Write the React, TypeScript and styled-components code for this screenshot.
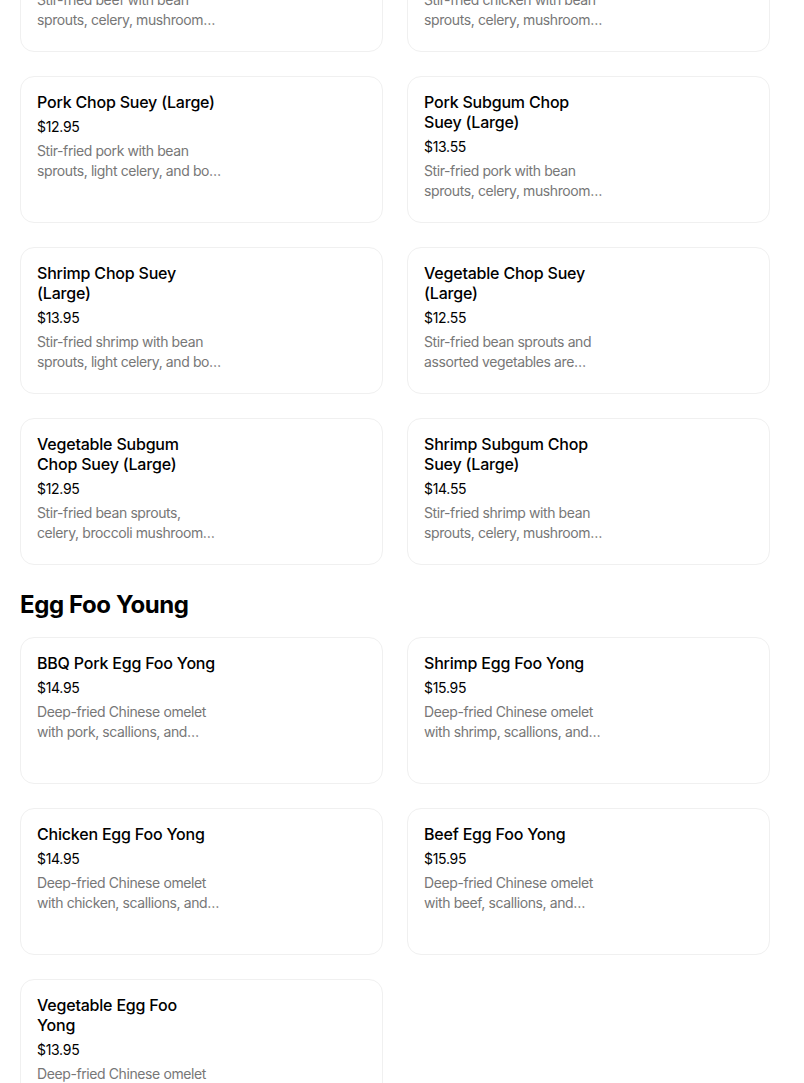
import React from "react";
import styled, { createGlobalStyle } from "styled-components";

const Global = createGlobalStyle`
  html, body { margin: 0; padding: 0; background: #ffffff; }
  body { font-family: Inter, "Noto Sans", "Liberation Sans", sans-serif; color: #000; overflow: hidden; }
`;

const Page = styled.main`
  padding: 0 34px 0 20px;
  margin-top: -95px;
  display: flex;
  flex-direction: column;
`;

const Section = styled.section`
  display: flex;
  flex-direction: column;
`;

const SectionTitle = styled.h2`
  margin: 24px 0 16px;
  font-size: 24px;
  line-height: 32px;
  font-weight: 700;
  letter-spacing: -0.4px;
  color: #000;
`;

const Grid = styled.div`
  display: grid;
  grid-template-columns: 1fr 1fr;
  column-gap: 24px;
  row-gap: 24px;
`;

const Card = styled.article`
  box-sizing: border-box;
  height: 147px;
  border: 1px solid #f0f0f0;
  border-radius: 14px;
  padding: 15px 16px;
  display: flex;
  background: #fff;
`;

const Info = styled.div`
  width: 187px;
  display: flex;
  flex-direction: column;
`;

const Name = styled.div`
  max-width: 181px;
  font-size: 16px;
  line-height: 20px;
  font-weight: 500;
  letter-spacing: -0.2px;
  color: #000;
`;

const Price = styled.div`
  margin-top: 5px;
  font-size: 14px;
  line-height: 20px;
  letter-spacing: -0.3px;
  color: #000;
`;

const Desc = styled.div`
  margin-top: 4px;
  font-size: 14px;
  line-height: 20px;
  letter-spacing: -0.4px;
  color: #777;
  display: -webkit-box;
  -webkit-line-clamp: 2;
  -webkit-box-orient: vertical;
  overflow: hidden;
`;

type Item = { name: string; price: string; desc: string };

const chopSuey: Item[] = [
  { name: "Beef Subgum Chop Suey (Large)", price: "$14.55", desc: "Stir-fried beef with bean sprouts, celery, mushroom and water chestnuts." },
  { name: "Chicken Subgum Chop Suey (Large)", price: "$13.55", desc: "Stir-fried chicken with bean sprouts, celery, mushroom and water chestnuts." },
  { name: "Pork Chop Suey (Large)", price: "$12.95", desc: "Stir-fried pork with bean sprouts, light celery, and bok choy." },
  { name: "Pork Subgum Chop Suey (Large)", price: "$13.55", desc: "Stir-fried pork with bean sprouts, celery, mushroom and water chestnuts." },
  { name: "Shrimp Chop Suey (Large)", price: "$13.95", desc: "Stir-fried shrimp with bean sprouts, light celery, and bok choy." },
  { name: "Vegetable Chop Suey (Large)", price: "$12.55", desc: "Stir-fried bean sprouts and assorted vegetables are served." },
  { name: "Vegetable Subgum Chop Suey (Large)", price: "$12.95", desc: "Stir-fried bean sprouts, celery, broccoli mushroom and water chestnuts." },
  { name: "Shrimp Subgum Chop Suey (Large)", price: "$14.55", desc: "Stir-fried shrimp with bean sprouts, celery, mushroom and water chestnuts." },
];

const eggFooYoung: Item[] = [
  { name: "BBQ Pork Egg Foo Yong", price: "$14.95", desc: "Deep-fried Chinese omelet with pork, scallions, and vegetables." },
  { name: "Shrimp Egg Foo Yong", price: "$15.95", desc: "Deep-fried Chinese omelet with shrimp, scallions, and vegetables." },
  { name: "Chicken Egg Foo Yong", price: "$14.95", desc: "Deep-fried Chinese omelet with chicken, scallions, and vegetables." },
  { name: "Beef Egg Foo Yong", price: "$15.95", desc: "Deep-fried Chinese omelet with beef, scallions, and vegetables." },
  { name: "Vegetable Egg Foo Yong", price: "$13.95", desc: "Deep-fried Chinese omelet with vegetables and scallions." },
];

const MenuCard = ({ item }: { item: Item }) => (
  <Card>
    <Info>
      <Name>{item.name}</Name>
      <Price>{item.price}</Price>
      <Desc>{item.desc}</Desc>
    </Info>
  </Card>
);

export default function App() {
  return (
    <>
      <Global />
      <Page>
        <Section>
          <Grid>
            {chopSuey.map((it) => (
              <MenuCard key={it.name} item={it} />
            ))}
          </Grid>
        </Section>
        <Section>
          <SectionTitle>Egg Foo Young</SectionTitle>
          <Grid>
            {eggFooYoung.map((it) => (
              <MenuCard key={it.name} item={it} />
            ))}
          </Grid>
        </Section>
      </Page>
    </>
  );
}
